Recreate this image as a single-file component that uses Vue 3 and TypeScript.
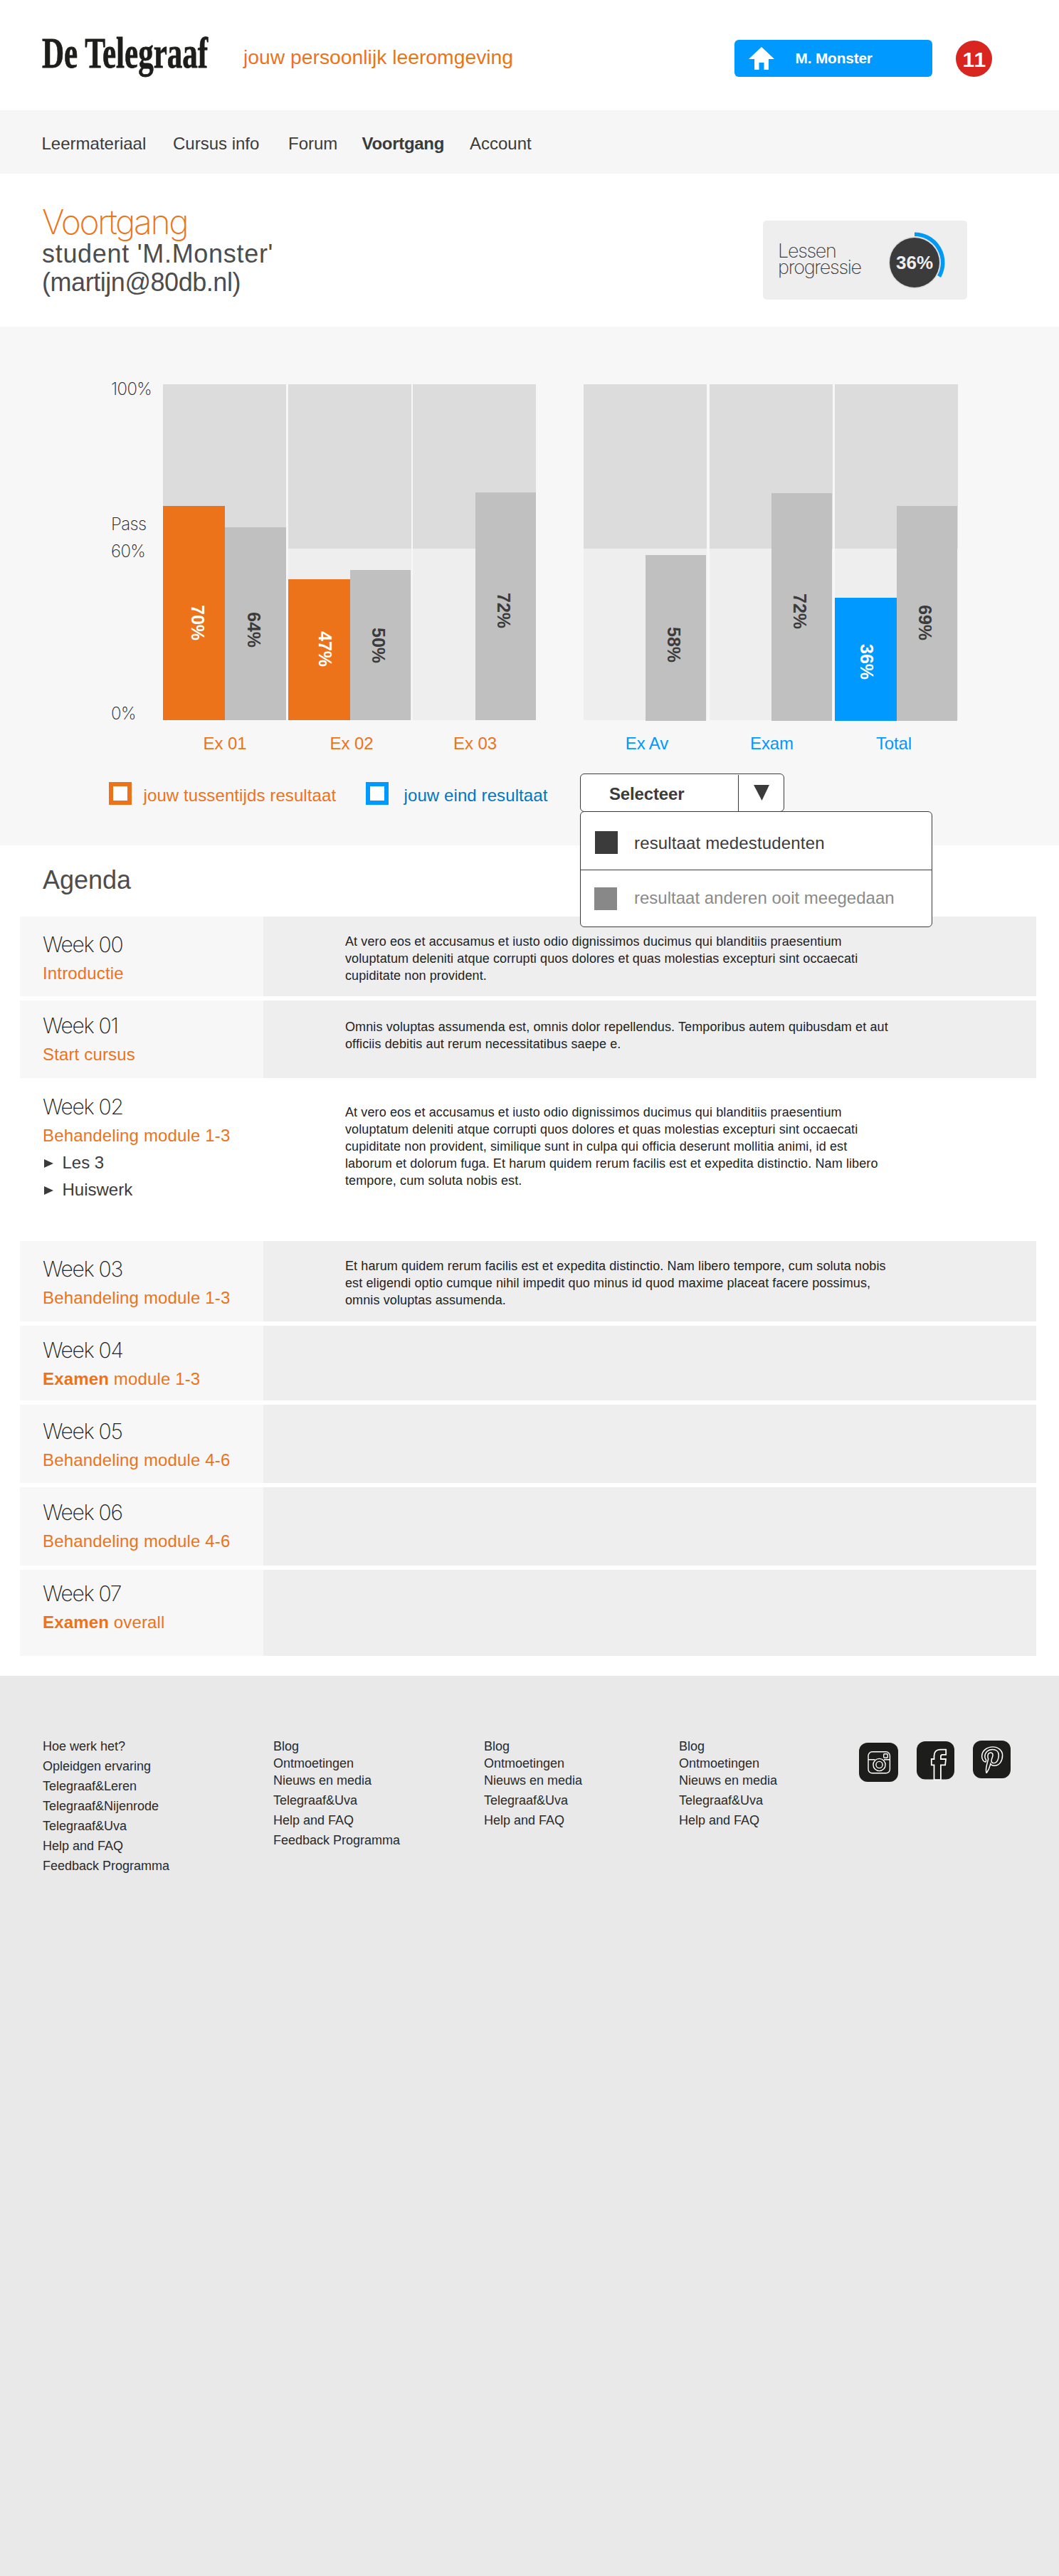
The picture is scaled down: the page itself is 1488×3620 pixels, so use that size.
<script setup lang="ts">
interface Bar { value: number; height: number; labelTop: number; shift: number; width: number; kind: 'mid' | 'final' | 'peer' | 'none' }
interface Exam { name: string; shift: number; bars: Bar[] }
interface Week { name: string; strong?: string; topic: string; height: number; gap: number; top: number; textTop: number; open?: boolean; lines: string[]; links?: string[] }

const nav = ['Leermateriaal', 'Cursus info', 'Forum', 'Voortgang', 'Account']
const current = 'Voortgang'

const empty = (width: number): Bar => ({ value: 0, height: 0, labelTop: 0, shift: 0, width, kind: 'none' })

const groups: { id: string; exams: Exam[] }[] = [
  {
    id: 'interim',
    exams: [
      { name: 'Ex 01', shift: 1, bars: [
        { value: 70, height: 301, labelTop: 139, shift: 10, width: 87, kind: 'mid' },
        { value: 64, height: 271, labelTop: 119, shift: -5, width: 86, kind: 'peer' } ] },
      { name: 'Ex 02', shift: 5, bars: [
        { value: 47, height: 198, labelTop: 73, shift: 16, width: 87, kind: 'mid' },
        { value: 50, height: 211, labelTop: 81, shift: -6, width: 85, kind: 'peer' } ] },
      { name: 'Ex 03', shift: 2, bars: [
        empty(88),
        { value: 72, height: 320, labelTop: 141, shift: -6, width: 85, kind: 'peer' } ] }
    ]
  },
  {
    id: 'final',
    exams: [
      { name: 'Ex Av', shift: 5, bars: [
        empty(87),
        { value: 58, height: 233, labelTop: 101, shift: -6, width: 85, kind: 'peer' } ] },
      { name: 'Exam', shift: 2, bars: [
        empty(87),
        { value: 72, height: 320, labelTop: 141, shift: -6, width: 85, kind: 'peer' } ] },
      { name: 'Total', shift: -7, bars: [
        { value: 36, height: 173, labelTop: 65, shift: 3, width: 87, kind: 'final' },
        { value: 69, height: 302, labelTop: 139, shift: -6, width: 85, kind: 'peer' } ] }
    ]
  }
]

const weeks: Week[] = [
  { name: 'Week 00', topic: 'Introductie', height: 112, gap: 6, top: 21, textTop: 22.5, lines: [
    'At vero eos et accusamus et iusto odio dignissimos ducimus qui blanditiis praesentium',
    'voluptatum deleniti atque corrupti quos dolores et quas molestias excepturi sint occaecati',
    'cupiditate non provident.' ] },
  { name: 'Week 01', topic: 'Start cursus', height: 109, gap: 0, top: 17, textTop: 24.5, lines: [
    'Omnis voluptas assumenda est, omnis dolor repellendus. Temporibus autem quibusdam et aut',
    'officiis debitis aut rerum necessitatibus saepe e.' ] },
  { name: 'Week 02', topic: 'Behandeling module 1-3', height: 229, gap: 0, top: 22, textTop: 35.5, open: true, lines: [
    'At vero eos et accusamus et iusto odio dignissimos ducimus qui blanditiis praesentium',
    'voluptatum deleniti atque corrupti quos dolores et quas molestias excepturi sint occaecati',
    'cupiditate non provident, similique sunt in culpa qui officia deserunt mollitia animi, id est',
    'laborum et dolorum fuga. Et harum quidem rerum facilis est et expedita distinctio. Nam libero',
    'tempore, cum soluta nobis est.' ], links: ['Les 3', 'Huiswerk'] },
  { name: 'Week 03', topic: 'Behandeling module 1-3', height: 113, gap: 6, top: 21, textTop: 23, lines: [
    'Et harum quidem rerum facilis est et expedita distinctio. Nam libero tempore, cum soluta nobis',
    'est eligendi optio cumque nihil impedit quo minus id quod maxime placeat facere possimus,',
    'omnis voluptas assumenda.' ] },
  { name: 'Week 04', strong: 'Examen', topic: 'module 1-3', height: 105, gap: 6, top: 16, textTop: 0, lines: [] },
  { name: 'Week 05', topic: 'Behandeling module 4-6', height: 110, gap: 6, top: 19, textTop: 0, lines: [] },
  { name: 'Week 06', topic: 'Behandeling module 4-6', height: 110, gap: 6, top: 17, textTop: 0, lines: [] },
  { name: 'Week 07', strong: 'Examen', topic: 'overall', height: 121, gap: 0, top: 15, textTop: 0, lines: [] }
]

const footer: string[][] = [
  ['Hoe werk het?', 'Opleidgen ervaring', 'Telegraaf&Leren', 'Telegraaf&Nijenrode', 'Telegraaf&Uva', 'Help and FAQ', 'Feedback Programma'],
  ['Blog', 'Ontmoetingen', 'Nieuws en media', 'Telegraaf&Uva', 'Help and FAQ', 'Feedback Programma'],
  ['Blog', 'Ontmoetingen', 'Nieuws en media', 'Telegraaf&Uva', 'Help and FAQ'],
  ['Blog', 'Ontmoetingen', 'Nieuws en media', 'Telegraaf&Uva', 'Help and FAQ']
]
</script>

<template>
  <div class="page">
    <header class="top">
      <svg class="logo" width="246" height="80" viewBox="0 0 246 80">
        <text transform="translate(1 60) scale(.706 1)">De Telegraaf</text>
      </svg>
      <div class="tagline">jouw persoonlijk leeromgeving</div>
      <div class="user">
        <svg width="36" height="33" viewBox="0 0 36 33"><path fill="#fff" d="M18 0 36 17H28V32H21.5V22H14.5V32H8V17H0Z" /></svg>
        <span>M. Monster</span>
      </div>
      <div class="count">11</div>
    </header>

    <nav class="nav">
      <a v-for="item in nav" :key="item" :class="{ active: item === current }">{{ item }}</a>
    </nav>

    <section class="intro">
      <div class="who">
        <h1>Voortgang</h1>
        <p>student 'M.Monster'</p>
        <p class="mail">(martijn@80db.nl)</p>
      </div>
      <div class="card">
        <div class="card-text"><div>Lessen</div><div>progressie</div></div>
        <div class="dial">
          <svg width="90" height="90" viewBox="0 0 90 90">
            <circle cx="45" cy="45" r="36.4" fill="#dcdcdc" />
            <circle cx="45" cy="45" r="35" fill="#3b3b3b" />
            <path d="M45 5.3A39.7 39.7 0 0 1 79.6 64.5" fill="none" stroke="#0099f5" stroke-width="5.6" />
          </svg>
          <span>36%</span>
        </div>
      </div>
    </section>

    <section class="results">
      <div class="charts">
        <div class="axis">
          <span>100%</span><span class="pass">Pass</span><span class="sixty">60%</span><span class="zero">0%</span>
        </div>
        <div v-for="g in groups" :key="g.id" class="group" :class="g.id">
          <div v-for="e in g.exams" :key="e.name" class="exam">
            <div class="track">
              <div v-for="(b, i) in e.bars" :key="i" class="bar" :class="b.kind" :style="{ height: b.height + 'px', width: b.width + 'px' }">
                <span v-if="b.value" :style="{ marginTop: b.labelTop + 'px', marginLeft: b.shift + 'px' }">{{ b.value }}%</span>
              </div>
            </div>
            <div class="name" :style="{ marginLeft: e.shift + 'px' }">{{ e.name }}</div>
          </div>
        </div>
      </div>
      <div class="legend">
        <i class="box orange"></i><span class="l-orange">jouw tussentijds resultaat</span>
        <i class="box blue"></i><span class="l-blue">jouw eind resultaat</span>
        <div class="select">
          <div class="value">Selecteer</div>
          <div class="arrow"><svg width="22" height="22" viewBox="0 0 22 22"><path d="M0 0H22L11.5 22Z" fill="#3b3b3b" /></svg></div>
          <div class="menu">
            <div class="option"><i></i>resultaat medestudenten</div>
            <div class="option muted"><i></i>resultaat anderen ooit meegedaan</div>
          </div>
        </div>
      </div>
    </section>

    <section class="agenda">
      <h2>Agenda</h2>
      <div v-for="w in weeks" :key="w.name" class="week" :class="{ open: w.open }" :style="{ height: w.height + 'px', marginBottom: w.gap + 'px' }">
        <div class="left" :style="{ paddingTop: w.top + 'px' }">
          <h3>{{ w.name }}</h3>
          <div class="topic"><b v-if="w.strong">{{ w.strong }}</b>{{ w.strong ? ' ' : '' }}{{ w.topic }}</div>
          <div v-for="l in w.links" :key="l" class="sub">
            <svg width="13" height="12" viewBox="0 0 13 12"><path d="M0 0 13 6 0 12Z" fill="#3b3b3b" /></svg>{{ l }}
          </div>
        </div>
        <div class="right" :style="{ paddingTop: w.textTop + 'px' }">
          <div v-for="line in w.lines" :key="line">{{ line }}</div>
        </div>
      </div>
    </section>

    <footer class="footer">
      <ul v-for="(col, i) in footer" :key="i" :class="{ tight: i > 0 }">
        <li v-for="item in col" :key="item">{{ item }}</li>
      </ul>
      <div class="social">
        <svg class="insta" width="55" height="55" viewBox="0 0 55 55">
          <rect width="55" height="55" rx="12" fill="#1d1d1b" />
          <g fill="none" stroke="#fff" stroke-width="1.4">
            <rect x="13" y="12.8" width="30.4" height="30" rx="5.5" />
            <path d="M13 23.8H22.5M35 23.8H43.4" />
            <circle cx="28.5" cy="31" r="8.6" /><circle cx="28.5" cy="31" r="4.6" />
            <rect x="34.7" y="15.7" width="5.5" height="5.5" rx="1" />
          </g>
        </svg>
        <svg class="fb" width="53" height="56" viewBox="0 0 53 56">
          <rect width="53" height="53.6" rx="12" fill="#1d1d1b" />
          <path d="M24.5 54.2V33.4H20.8V25H24.5V20.5C24.5 14.8 27.8 11.6 33 11.6H41.2V18.8H36.3C34.6 18.8 33.9 19.7 33.9 21.2V25H41L40.1 33.4H33.9V54.2Z" fill="#1d1d1b" stroke="#fff" stroke-width="1.8" />
        </svg>
        <svg class="pin" width="53" height="53" viewBox="0 0 53 53">
          <rect width="53" height="53" rx="12" fill="#1d1d1b" />
          <path transform="translate(12.6 8.4) scale(.0755 .073)" fill="none" stroke="#fff" stroke-width="20" d="M204 6.5C101.4 6.5 0 74.9 0 185.6C0 256 39.6 296 63.6 296C73.5 296 79.2 268.4 79.2 260.6C79.2 251.3 55.5 231.5 55.5 192.8C55.5 112.4 116.7 55.4 195.9 55.4C264 55.4 314.4 94.1 314.4 165.2C314.4 218.3 293.1 317.9 224.1 317.9C199.2 317.9 177.9 299.9 177.9 274.1C177.9 236.3 204.3 199.7 204.3 160.7C204.3 94.5 110.4 106.5 110.4 186.5C110.4 203.3 112.5 221.9 120 237.2C106.2 296.6 78 385.1 78 446.3C78 465.2 80.7 483.8 82.5 502.7C85.9 506.5 84.2 506.1 89.4 504.2C139.8 435.2 138 421.7 160.8 331.4C173.1 354.8 204.9 367.4 230.1 367.4C336.3 367.4 384 263.9 384 170.6C384 71.3 298.2 6.5 204 6.5Z" />
        </svg>
      </div>
    </footer>
  </div>
</template>

<style>
body { margin: 0; background: #fff; }
</style>

<style scoped>
.page { width: 1488px; height: 3620px; overflow: hidden; display: flex; flex-direction: column; background: #fff; font-family: "Liberation Sans", Arial, sans-serif; color: #3b3b3b; white-space: nowrap; }
h1, h2, h3, p, ul { margin: 0; padding: 0; font-weight: 400; }
ul { list-style: none; }
svg { display: block; flex: none; }

.top { height: 155px; flex: none; display: flex; align-items: flex-start; box-sizing: border-box; padding-left: 58px; }
.logo { margin-top: 35px; }
.logo text { font: bold 61px "Liberation Serif", serif; fill: #1d1d1b; stroke: #1d1d1b; stroke-width: .8px; }
.tagline { margin: 60px 0 0 38px; width: 690px; font-size: 28.3px; line-height: 40px; color: #ed731b; }
.user { margin-top: 56px; width: 278px; height: 52px; border-radius: 6px; background: #09f; display: flex; box-sizing: border-box; padding: 10px 0 0 19.5px; }
.user span { margin: -1px 0 0 30px; font-size: 20.8px; letter-spacing: -.15px; font-weight: 700; line-height: 34px; color: #fff; }
.count { margin: 57px 0 0 33px; width: 51px; height: 51px; border-radius: 50%; background: #d8251f; color: #fff; font-size: 30px; font-weight: 700; font-kerning: none; line-height: 53px; text-align: center; letter-spacing: -.6px; }

.nav { height: 89px; flex: none; box-sizing: border-box; padding: 32px 0 0 58.5px; background: #f6f6f6; display: grid; grid-template-columns: 184.5px 162px 103.5px 151.5px auto; font-size: 24px; line-height: 30px; }
.nav .active { font-weight: 700; letter-spacing: -.3px; }

.intro { height: 215px; flex: none; box-sizing: border-box; display: flex; justify-content: space-between; padding: 43.5px 129px 0 59px; }
.who h1 { font: 200 48px/48px Inter, sans-serif; letter-spacing: -2.4px; color: #ed731b; }
.who p { font-size: 36px; line-height: 40.5px; color: #4d4d4d; letter-spacing: .7px; padding-top: 1px; }
.who .mail { letter-spacing: -.45px; padding: 0; }
.card { margin-top: 22.5px; width: 287px; height: 111px; border-radius: 5px; background: #eee; display: flex; box-sizing: border-box; }
.card-text { padding: 31px 0 0 21px; width: 147px; box-sizing: content-box; font: 200 27px/23px Inter, sans-serif; letter-spacing: -1.3px; }
.dial { position: relative; margin-top: 14px; width: 90px; height: 90px; }
.dial span { position: absolute; inset: 0; text-align: center; line-height: 91px; font-size: 26px; font-weight: 700; color: #eee; }

.results { height: 729px; flex: none; background: #f7f7f7; box-sizing: border-box; padding-top: 81px; }
.charts { display: flex; height: 547px; padding-left: 156px; }
.axis { width: 73px; display: flex; flex-direction: column; margin-top: -8px; font: 200 24px/30px Inter, sans-serif; letter-spacing: -.6px; color: #222; }
.pass { margin-top: 160px; }
.sixty { margin-top: 8px; }
.zero { margin-top: 198px; }
.group { display: grid; }
.interim { grid-template-columns: 176px 175px 173px; color: #ed731b; }
.final.group { grid-template-columns: 177px 176px 173px; margin-left: 67px; color: #09f; }
.exam { width: 173px; }
.track { height: 472px; display: flex; align-items: flex-end; background: linear-gradient(#dcdcdc 231px, #eee 231px); }
.bar { display: flex; justify-content: center; align-items: flex-start; }
.bar span { writing-mode: vertical-rl; font-size: 25px; line-height: 30px; font-weight: 700; }
.bar.mid { background: #ed731b; color: #fff; }
.bar.final { background: #09f; color: #fff; }
.bar.peer { background: #c0c0c0; color: #3b3b3b; }
.group.final .bar { margin-bottom: -1px; }
.name { text-align: center; margin-top: 18px; font-size: 24px; line-height: 30px; letter-spacing: -.1px; }

.legend { display: flex; padding-left: 153px; font-size: 24px; line-height: 30px; }
.box { width: 20px; height: 20px; border: 6px solid; background: #fff; margin-top: 12px; }
.orange { border-color: #ed731b; }
.blue { border-color: #09f; }
.legend span { margin-top: 15.5px; letter-spacing: .1px; }
.l-orange { color: #ed731b; margin-left: 16.5px; width: 312.5px; }
.l-blue { color: #0077c3; margin-left: 21.5px; width: 247.5px; }
.select { position: relative; width: 287px; height: 54px; box-sizing: border-box; border: 1.5px solid #3b3b3b; border-radius: 6px; background: #fff; display: flex; }
.value { width: 222px; box-sizing: border-box; padding: 11.5px 0 0 40px; font-weight: 700; letter-spacing: -.15px; border-right: 1.5px solid #3b3b3b; margin-top: 1px; }
.arrow { padding: 15px 0 0 21px; }
.menu { position: absolute; left: -1px; top: 52px; width: 495px; height: 163px; box-sizing: border-box; border: 1.5px solid #3b3b3b; border-radius: 6px; background: #fff; z-index: 2; }
.option { height: 82px; box-sizing: border-box; display: flex; padding: 27px 0 0 20px; line-height: 34px; letter-spacing: .15px; border-bottom: 1.5px solid #3b3b3b; }
.option i { width: 32px; height: 32px; background: #3b3b3b; margin-right: 23px; }
.option.muted { border: 0; color: #8a8a8a; padding: 24px 0 0 19px; line-height: 30px; letter-spacing: 0; }
.option.muted i { background: #888; margin-right: 24px; }

.agenda { height: 1167px; flex: none; box-sizing: border-box; padding: 29px 32px 0 28px; }
.agenda h2 { height: 71px; font-size: 36px; line-height: 40px; padding-left: 32px; color: #4d4d4d; }
.week { display: grid; grid-template-columns: 342px 1fr; }
.left { background: #f7f7f7; padding-left: 32px; box-sizing: border-box; }
.left h3 { font: 200 30px/36px Inter, sans-serif; letter-spacing: -1.3px; color: #222; }
.topic { margin-top: 7.5px; font-size: 24px; line-height: 30px; letter-spacing: .15px; color: #ed731b; }
.sub { display: flex; align-items: center; gap: 13px; margin-top: 8px; font-size: 24px; line-height: 30px; }
.sub svg { margin: 2px 0 0 1.5px; }
.right { background: #eee; padding-left: 115px; box-sizing: border-box; font-size: 18px; line-height: 24px; letter-spacing: .11px; color: #222; }
.open .left, .open .right { background: #fff; }

.footer { flex: 1; background: #e9e9e9; display: grid; grid-template-columns: 324px 296px 274px 253px auto; padding: 85px 0 0 60px; font-size: 18px; color: #2a2a2a; }
.footer li { line-height: 28px; }
.tight { padding-top: 2px; }
.tight li:nth-child(-n+3) { line-height: 24px; }
.tight li:nth-child(4) { margin-top: 2px; }
.social { display: flex; align-items: flex-start; }
.insta { margin-top: 9px; }
.fb { margin: 7px 0 0 26px; }
.pin { margin: 6px 0 0 26px; }
</style>
